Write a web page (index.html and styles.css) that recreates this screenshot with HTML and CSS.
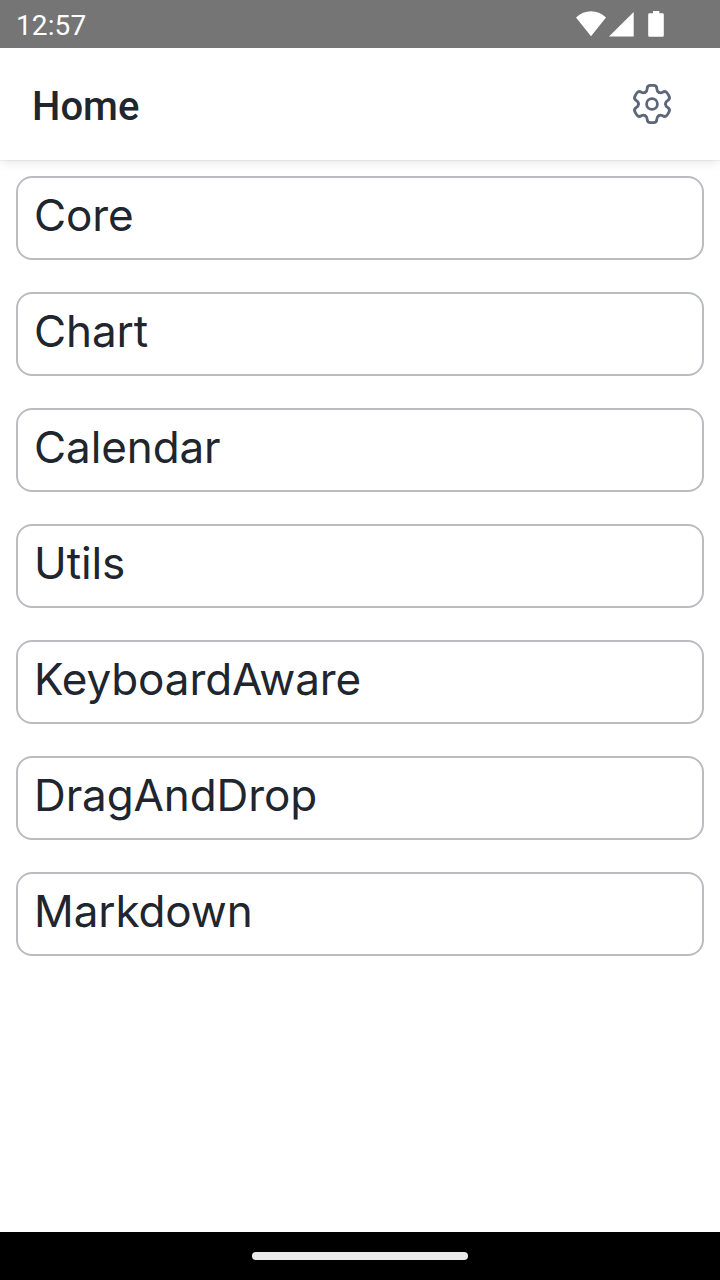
FILE: index.html
```html
<!DOCTYPE html>
<html lang="en">
<head>
<meta charset="utf-8">
<title>Home</title>
<link rel="stylesheet" href="styles.css">
</head>
<body>
<div class="screen">
  <div class="status">
    <span class="clock">12:57</span>
    <svg class="indicators" width="92" height="28" viewBox="0 0 92 28" fill="#fff">
      <path d="M0 7.6C4.500 3.500 9.500 1.300 15 1.300S25.500 3.500 30 7.600L15 26.200Z"/>
      <path d="M33 26.600L57.700 1.900V26.600Z"/>
      <path d="M77 1h6.300v2.200h3.200a1.300 1.300 0 0 1 1.300 1.300v21a1.300 1.300 0 0 1-1.300 1.300H73.500a1.300 1.300 0 0 1-1.300-1.300v-21a1.300 1.300 0 0 1 1.300-1.300H77Z"/>
    </svg>
  </div>
  <header class="bar">
    <h1 class="title">Home</h1>
    <svg class="gear" width="48" height="48" viewBox="-24 -24 48 48" fill="none" stroke="#5e667a" stroke-width="2.8" stroke-linecap="round">
      <defs><path id="tooth" d="M-6.750 -11.700C-5.400 -12.500 -4.900 -13.400 -4.900 -15C-4.900 -17.500 -3.400 -18.700 -1.500 -18.700H1.500C3.400 -18.700 4.900 -17.500 4.900 -15C4.900 -13.400 5.400 -12.500 6.750 -11.700"/></defs>
      <use href="#tooth"/>
      <use href="#tooth" transform="rotate(60)"/>
      <use href="#tooth" transform="rotate(120)"/>
      <use href="#tooth" transform="rotate(180)"/>
      <use href="#tooth" transform="rotate(240)"/>
      <use href="#tooth" transform="rotate(300)"/>
      <circle r="5.400"/>
    </svg>
  </header>
  <main class="list">
    <div class="item">Core</div>
    <div class="item">Chart</div>
    <div class="item">Calendar</div>
    <div class="item">Utils</div>
    <div class="item">KeyboardAware</div>
    <div class="item">DragAndDrop</div>
    <div class="item">Markdown</div>
  </main>
  <div class="navbar"><div class="handle"></div></div>
</div>
</body>
</html>
```

FILE: styles.css
```css
* { box-sizing: border-box; }
body { margin: 0; }
.screen {
  display: flex;
  flex-direction: column;
  width: 720px;
  height: 1280px;
  background: #fff;
  color: #20252e;
}
.status {
  display: flex;
  align-items: center;
  justify-content: space-between;
  height: 48px;
  padding: 0 52px 0 16px;
  background: #757575;
}
.clock {
  color: #fff;
  font: 400 28px/48px Roboto, sans-serif;
  letter-spacing: .1px;
  padding-top: 4px;
}
.bar {
  display: flex;
  align-items: center;
  justify-content: space-between;
  height: 112px;
  padding: 0 44px 0 32px;
  background: #fff;
  box-shadow: 0 1px 1px rgba(0, 0, 0, .05), 0 6px 9px -2px rgba(0, 0, 0, .08);
}
.title {
  margin: 0;
  padding-top: 6px;
  font: 500 40px/48px Roboto, sans-serif;
}
.list {
  flex: 1;
  display: flex;
  flex-direction: column;
  gap: 32px;
  padding: 16px;
}
.item {
  height: 84px;
  padding: 7px 16px;
  border: 2px solid #bbbcc0;
  border-radius: 16px;
  font: 400 44px/60px Inter, sans-serif;
  letter-spacing: -.1px;
}
.navbar {
  display: flex;
  align-items: center;
  justify-content: center;
  height: 48px;
  background: #000;
}
.handle {
  width: 216px;
  height: 8px;
  border-radius: 4px;
  background: #ebebeb;
}
```
